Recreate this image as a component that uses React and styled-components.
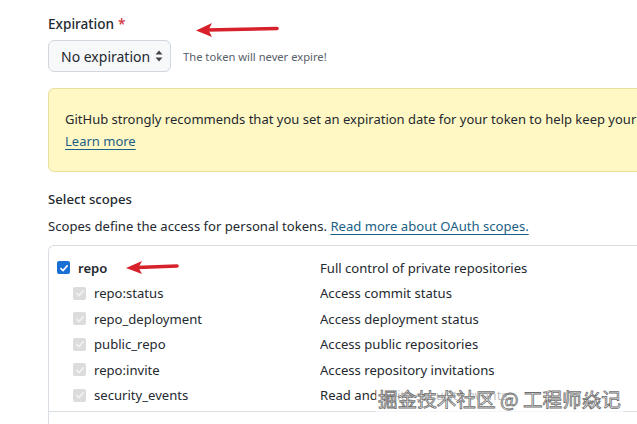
import React from "react"
import styled, { createGlobalStyle } from "styled-components"

const GlobalStyle = createGlobalStyle`
  html, body {
    margin: 0;
    padding: 0;
    background: #ffffff;
    overflow: hidden;
  }
  body {
    font-family: "Noto Sans", "Open Sans", sans-serif;
    color: #24292f;
  }
`

const Page = styled.div`
  position: relative;
  width: 637px;
  height: 424px;
  overflow: hidden;
  padding: 13px 0 0 48px;
  box-sizing: border-box;
`

const Label = styled.div`
  font-size: 13.6px;
  font-weight: 500;
  line-height: 20px;
  height: 22px;
  display: flex;
  align-items: center;
  gap: 4px;
`

const Required = styled.span`
  color: #d1333c;
`

const ArrowWrap = styled.span`
  position: relative;
  display: inline-block;
  width: 0;
  height: 0;
`

const RedArrow = styled.svg`
  position: absolute;
  left: ${(p) => p.x}px;
  top: ${(p) => p.y}px;
`

const SelectRow = styled.div`
  display: flex;
  align-items: center;
  gap: 12px;
  margin-top: 5px;
`

const Select = styled.div`
  box-sizing: border-box;
  width: 123px;
  height: 32px;
  border: 1px solid #d0d7de;
  border-radius: 6px;
  background: #f6f8fa;
  display: flex;
  align-items: center;
  justify-content: space-between;
  padding: 0 7px 0 12px;
  font-size: 14px;
`

const Note = styled.span`
  font-size: 11.2px;
  color: #57606a;
`

const Flash = styled.div`
  margin-top: 16px;
  width: 620px;
  height: 84px;
  box-sizing: border-box;
  background: #fff8c5;
  border: 1px solid #eadfa0;
  border-radius: 6px;
  padding: 19px 16px 0 16px;
  font-size: 13px;
  line-height: 22px;
  white-space: nowrap;
  overflow: hidden;
`

const Link = styled.a`
  color: #1b5f86;
  text-decoration: underline;
  text-underline-offset: 3px;
`

const Heading = styled.div`
  font-size: 13.2px;
  font-weight: 500;
  margin-top: 16px;
  line-height: 22px;
`

const Desc = styled.div`
  font-size: 13.1px;
  margin-top: 5px;
  line-height: 22px;
  white-space: nowrap;
`

const Table = styled.div`
  margin-top: 8px;
  width: 640px;
  height: 200px;
  box-sizing: border-box;
  border: 1px solid #d8dee4;
  border-right: none;
  border-radius: 6px 0 0 0;
  padding-top: 9px;
`

const Row = styled.div`
  display: grid;
  grid-template-columns: 271px 1fr;
  align-items: center;
  height: 25.5px;
  font-size: 13.1px;
  white-space: nowrap;
`

const Name = styled.div`
  display: flex;
  align-items: center;
  gap: 8px;
  padding-left: ${(p) => (p.sub ? 24 : 8)}px;
  font-weight: ${(p) => (p.sub ? 400 : 600)};
`

const Box = styled.span`
  width: 13px;
  height: 13px;
  border-radius: 2px;
  box-sizing: border-box;
  background: ${(p) => (p.disabled ? "#dcdcdc" : "#1a6fd4")};
  display: inline-flex;
  align-items: center;
  justify-content: center;
  flex: none;
`

const Divider = styled.div`
  margin-top: 3px;
  border-top: 1px solid #d8dee4;
`

const Watermark = styled.div`
  position: absolute;
  left: 376px;
  top: 386px;
  padding: 0 2px;
  font-family: "Noto Sans CJK SC", sans-serif;
  font-size: 19.6px;
  line-height: 26px;
  letter-spacing: 0;
  color: #ffffff;
  background: rgba(255, 255, 255, 0.7);
  -webkit-text-stroke: 0.8px #6e6e6e;
  white-space: nowrap;
`

const Check = ({ disabled }) => (
  <Box disabled={disabled}>
    <svg width="10" height="10" viewBox="0 0 10 10">
      <path
        d="M1.5 5.2 L4 7.6 L8.6 2.4"
        fill="none"
        stroke={disabled ? "#f2f2f2" : "#fff"}
        strokeWidth="1.6"
      />
    </svg>
  </Box>
)

const Arrow = ({ x, y, w, h }) => (
  <RedArrow x={x} y={y} width={w} height={h} viewBox={`0 0 ${w} ${h}`}>
    <path
      d={`M12 ${h / 2} L${w - 2} ${h / 2 - 1.5}`}
      stroke="#d7212b"
      strokeWidth="3.6"
      strokeLinecap="round"
    />
    <path
      d={`M1 ${h / 2 + 0.5} L17 1 L13.5 ${h / 2} L17 ${h - 1} Z`}
      fill="#d7212b"
      strokeLinejoin="round"
    />
  </RedArrow>
)

const rows = [
  ["repo:status", "Access commit status"],
  ["repo_deployment", "Access deployment status"],
  ["public_repo", "Access public repositories"],
  ["repo:invite", "Access repository invitations"],
  ["security_events", "Read and write security events"],
]

export default function App() {
  return (
    <Page>
      <GlobalStyle />
      <Label>
        Expiration <Required>*</Required>
        <ArrowWrap>
          <Arrow x={66} y={-2} w={84} h={16} />
        </ArrowWrap>
      </Label>
      <SelectRow>
        <Select>
          No expiration
          <svg width="8" height="14" viewBox="0 0 8 14">
            <path d="M4 1.5 L7.5 5.5 L0.5 5.5 Z" fill="#444" />
            <path d="M4 12.5 L7.5 8.5 L0.5 8.5 Z" fill="#444" />
          </svg>
        </Select>
        <Note>The token will never expire!</Note>
      </SelectRow>
      <Flash>
        GitHub strongly recommends that you set an expiration date for your token to help keep your information secure.
        <br />
        <Link>Learn more</Link>
      </Flash>
      <Heading>Select scopes</Heading>
      <Desc>
        Scopes define the access for personal tokens. <Link>Read more about OAuth scopes.</Link>
      </Desc>
      <Table>
        <Row>
          <Name>
            <Check />
            repo
            <ArrowWrap>
              <Arrow x={10} y={-8} w={54} h={15} />
            </ArrowWrap>
          </Name>
          <span>Full control of private repositories</span>
        </Row>
        {rows.map(([n, d]) => (
          <Row key={n}>
            <Name sub>
              <Check disabled />
              {n}
            </Name>
            <span>{d}</span>
          </Row>
        ))}
        <Divider />
      </Table>
      <Watermark>掘金技术社区 @ 工程师焱记</Watermark>
    </Page>
  )
}
